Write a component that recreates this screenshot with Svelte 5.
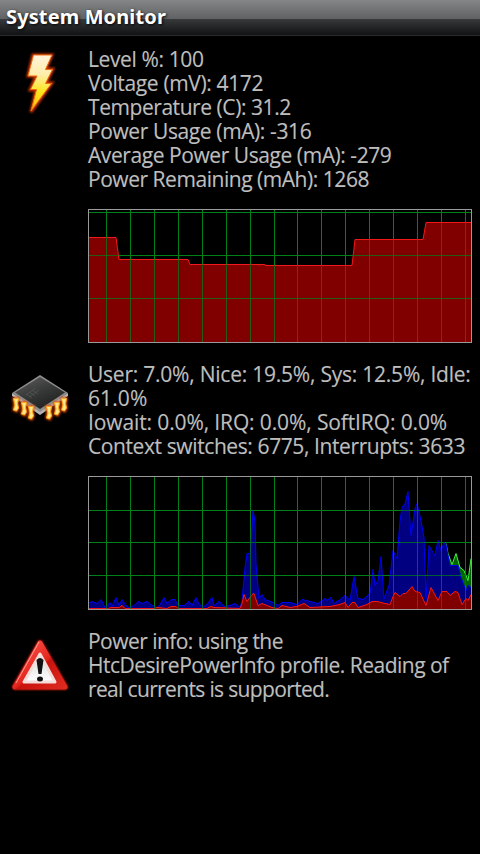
<script>
    // tracking is tuned per line, in px
    const battery = [
        { text: 'Level %: 100', tracking: -0.38 },
        { text: 'Voltage (mV): 4172', tracking: -0.36 },
        { text: 'Temperature (C): 31.2', tracking: -0.44 },
        { text: 'Power Usage (mA): -316', tracking: -0.39 },
        { text: 'Average Power Usage (mA): -279', tracking: -0.43 },
        { text: 'Power Remaining (mAh): 1268', tracking: -0.46 }
    ]

    const cpu = [
        { text: 'User: 7.0%, Nice: 19.5%, Sys: 12.5%, Idle:', tracking: -0.23 },
        { text: '61.0%', tracking: 0.1 },
        { text: 'Iowait: 0.0%, IRQ: 0.0%, SoftIRQ: 0.0%', tracking: -0.12 },
        { text: 'Context switches: 6775, Interrupts: 3633', tracking: -0.4 }
    ]

    const info = [
        { text: 'Power info: using the', tracking: -0.54 },
        { text: 'HtcDesirePowerInfo profile. Reading of', tracking: -0.51 },
        { text: 'real currents is supported.', tracking: -0.65 }
    ]

    // chart space is 384x134, y grows downwards
    const columns = [18, 42, 66, 90, 114, 138, 162, 186, 209, 233, 257, 281, 305, 329, 353, 377]

    const power = '0,28 28,28 31,50 100,50 102,55 176,55 178,56 264,56 267,30 335,30 338,13 383,13'

    const user = '0,127 4,125 9,127 13,123 17,131 22,126 24,130 28,121 31,129 34,123 38,129 41,131 46,129 50,125 54,127 59,125 64,129 69,131 72,128 76,121 79,127 83,123 87,123 90,129 96,129 101,125 104,129 108,121 111,128 116,130 119,128 124,121 126,129 131,125 136,130 142,129 147,127 152,131 154,124 157,91 159,77 162,77 164,50 165,34 167,44 168,87 171,122 174,118 177,123 185,126 190,129 194,126 202,126 209,128 214,123 222,125 230,127 237,122 239,124 243,121 246,127 251,124 257,119 262,124 266,100 270,122 275,123 282,117 285,93 287,109 290,104 293,80 296,122 301,109 305,74 309,82 312,44 314,31 317,27 320,15 323,59 327,32 329,27 333,44 336,61 338,122 341,69 345,76 347,79 350,64 353,74 356,66 358,68 362,89 367,89 370,89 373,101 378,114 380,109 383,111'

    const nice = '356,66 358,67 360,77 364,88 368,77 372,91 376,94 380,104 383,82'

    const sys = '0,132 20,132 23,131 31,131 34,129 37,132 66,132 69,131 79,132 83,130 88,130 90,132 119,132 123,130 126,131 152,132 154,127 156,118 159,125 164,118 166,117 170,129 174,127 184,131 190,132 194,129 202,131 209,130 216,127 222,131 242,130 252,128 257,126 260,131 264,126 267,126 270,131 279,128 284,125 289,125 297,127 302,128 305,120 307,116 312,120 315,117 318,117 324,110 327,115 332,116 338,129 343,111 350,124 354,115 359,115 362,119 367,115 370,116 374,128 378,122 380,124 383,118'

    const charts = {
        battery: { rows: [3, 46, 89], layers: [{ name: 'red', points: power }] },
        cpu: {
            rows: [34, 66, 99],
            layers: [
                { name: 'green', points: nice },
                { name: 'blue', points: user },
                { name: 'red', points: sys }
            ]
        }
    }

    const pins = [[5, 35], [13, 39], [20, 43], [53, 35], [46, 39], [38, 43]]

    // close a line down to the baseline
    const area = (points) => {
        const list = points.split(' ')
        const first = list[0].split(',')[0]
        const last = list[list.length - 1].split(',')[0]
        return `${first},133 ${points} ${last},133`
    }
</script>

{#snippet lines(rows)}
    <div class="lines">
        {#each rows as row}
            <div style:letter-spacing="{row.tracking}px">{row.text}</div>
        {/each}
    </div>
{/snippet}

{#snippet grid(rows, name)}
    <g class={name}>
        {#each columns as x}
            <rect {x} y="1" width="1" height="132" />
        {/each}
        {#each rows as y}
            <rect x="1" {y} width="382" height="1" />
        {/each}
    </g>
{/snippet}

{#snippet chart(data)}
    <svg class="chart" viewBox="0 0 384 134">
        {@render grid(data.rows, 'grid')}
        {#each data.layers as layer}
            <polygon class="{layer.name}-fill" points={area(layer.points)} />
            <polyline class="{layer.name}-line" points={layer.points} transform="translate(0 0.5)" />
        {/each}
        {@render grid(data.rows, 'grid-over')}
        <rect class="frame" x="0.5" y="0.5" width="383" height="133" />
    </svg>
{/snippet}

<header>System Monitor</header>

<main>
    <section>
        <svg class="icon" viewBox="0 0 64 72">
            <defs>
                <linearGradient id="bolt" x1="0" y1="0" x2="0" y2="1">
                    <stop offset="0" stop-color="#fff4dc" />
                    <stop offset="0.35" stop-color="#ffeeaa" />
                    <stop offset="0.65" stop-color="#ffe61e" />
                    <stop offset="1" stop-color="#ffc000" />
                </linearGradient>
                <filter id="glow" x="-30%" y="-30%" width="160%" height="160%">
                    <feGaussianBlur stdDeviation="1" />
                </filter>
            </defs>
            <path d="M25 7H44L38 21H45L38 35H44L23 64L28 42H22L28 28H20Z" fill="none" stroke="#c43100" stroke-width="3" filter="url(#glow)" />
            <path d="M25.500 7H44L37.500 21.500H44.500L37.500 35.500H43.500L23 63L28.500 41.500H22.500L29 28H20Z" fill="url(#bolt)" stroke="#f36a12" stroke-width="1" />
        </svg>
        <div class="content">
            {@render lines(battery)}
            {@render chart(charts.battery)}
        </div>
    </section>

    <section>
        <svg class="icon" viewBox="0 0 64 72">
            <defs>
                <linearGradient id="chip" x1="0" y1="0" x2="0.6" y2="1">
                    <stop offset="0" stop-color="#606060" />
                    <stop offset="0.5" stop-color="#3a3b3b" />
                    <stop offset="1" stop-color="#202222" />
                </linearGradient>
            </defs>
            <path d="M4 30L32 47L60 30V33L32 52L4 33Z" fill="#b4b4b2" />
            <path d="M32 12L60 30L32 49L4 30Z" fill="#8d8d8b" />
            <path d="M32 14L57 29.500L32 46L7 29.500Z" fill="url(#chip)" />
            <path d="M24 27L30 31M21 29L27 33M18 31L24 35M28 25L18 32M31 27L21 34" stroke="#5c5c5c" stroke-width="0.600" />
            {#each pins as [x, y]}
                <g transform="translate({x} {y})">
                    <path d="M0 0H6L5 6L6 10L4 14L0 12L1 7Z" fill="#ff7a10" stroke="#d13e00" stroke-width="1.500" filter="url(#glow)" />
                    <path d="M0.500 0.500H5.500L4.500 5.500L5.500 10L3.500 13L0.500 12L2 7Z" fill="#ffe98a" stroke="#ffa41c" stroke-width="1" />
                </g>
            {/each}
        </svg>
        <div class="content">
            {@render lines(cpu)}
            {@render chart(charts.cpu)}
        </div>
    </section>

    <section>
        <svg class="icon" viewBox="0 0 64 72">
            <defs>
                <linearGradient id="warn" x1="0" y1="0" x2="1" y2="1">
                    <stop offset="0" stop-color="#ff5a50" />
                    <stop offset="0.5" stop-color="#e5281f" />
                    <stop offset="0.55" stop-color="#c9120d" />
                    <stop offset="1" stop-color="#df2a20" />
                </linearGradient>
                <linearGradient id="paper" x1="0" y1="0" x2="0" y2="1">
                    <stop offset="0" stop-color="#d6dada" />
                    <stop offset="1" stop-color="#ffffff" />
                </linearGradient>
            </defs>
            <path d="M32 13L57 57H7Z" fill="#c01810" stroke="#b0160f" stroke-width="6" stroke-linejoin="round" filter="url(#glow)" />
            <path d="M32 13L57 57H7Z" fill="url(#warn)" stroke="url(#warn)" stroke-width="5" stroke-linejoin="round" />
            <path d="M31 12L8 53" fill="none" stroke="#ff9d94" stroke-width="1" />
            <path d="M32 24L47 52H16Z" fill="url(#paper)" stroke="#f3dedb" stroke-width="3" stroke-linejoin="round" />
            <path d="M28.500 30Q32 26 35.500 30L33.500 44H30.500Z" fill="#111" />
            <ellipse cx="32" cy="49" rx="3" ry="2.500" fill="#111" />
        </svg>
        <div class="content">
            {@render lines(info)}
        </div>
    </section>
</main>

<style>
    :global(body) {
        background: #000;
    }

    header {
        box-sizing: border-box;
        height: 36px;
        padding-left: 6px;
        line-height: 34px;
        font-family: "Noto Sans", "Open Sans", sans-serif;
        font-size: 20px;
        font-weight: 700;
        letter-spacing: 0.12px;
        color: #fff;
        text-shadow: 1px 1px 3px #000;
        background: linear-gradient(#858688 0, #606163 19px, #37393a 19px, #111213 35px);
        border-bottom: 1px solid #2b2b2b;
    }

    main {
        display: flex;
        flex-direction: column;
        gap: 19px;
        padding: 11px 8px 0;
    }

    section {
        display: flex;
        gap: 16px;
    }

    .icon {
        flex: none;
        width: 64px;
        height: 72px;
        margin-top: 1px;
    }

    .content {
        width: 384px;
    }

    .lines {
        font-family: "Open Sans", "Noto Sans", sans-serif;
        font-size: 21px;
        line-height: 24px;
        white-space: nowrap;
        color: #bebebe;
        -webkit-text-stroke: 0.15px #bebebe;
    }

    .chart {
        display: block;
        width: 384px;
        height: 134px;
        margin-top: 18px;
        shape-rendering: crispEdges;
    }

    .grid {
        fill: #00801a;
    }

    .grid-over {
        fill: #008018;
        fill-opacity: 0.72;
    }

    .frame {
        fill: none;
        stroke: #999;
    }

    polyline {
        fill: none;
        stroke-width: 1;
        shape-rendering: auto;
    }

    .red-fill {
        fill: #800000;
    }

    .red-line {
        stroke: #f01818;
    }

    .blue-fill {
        fill: #000080;
    }

    .blue-line {
        stroke: #0000f0;
    }

    .green-fill {
        fill: #006400;
    }

    .green-line {
        stroke: #40f040;
    }
</style>
